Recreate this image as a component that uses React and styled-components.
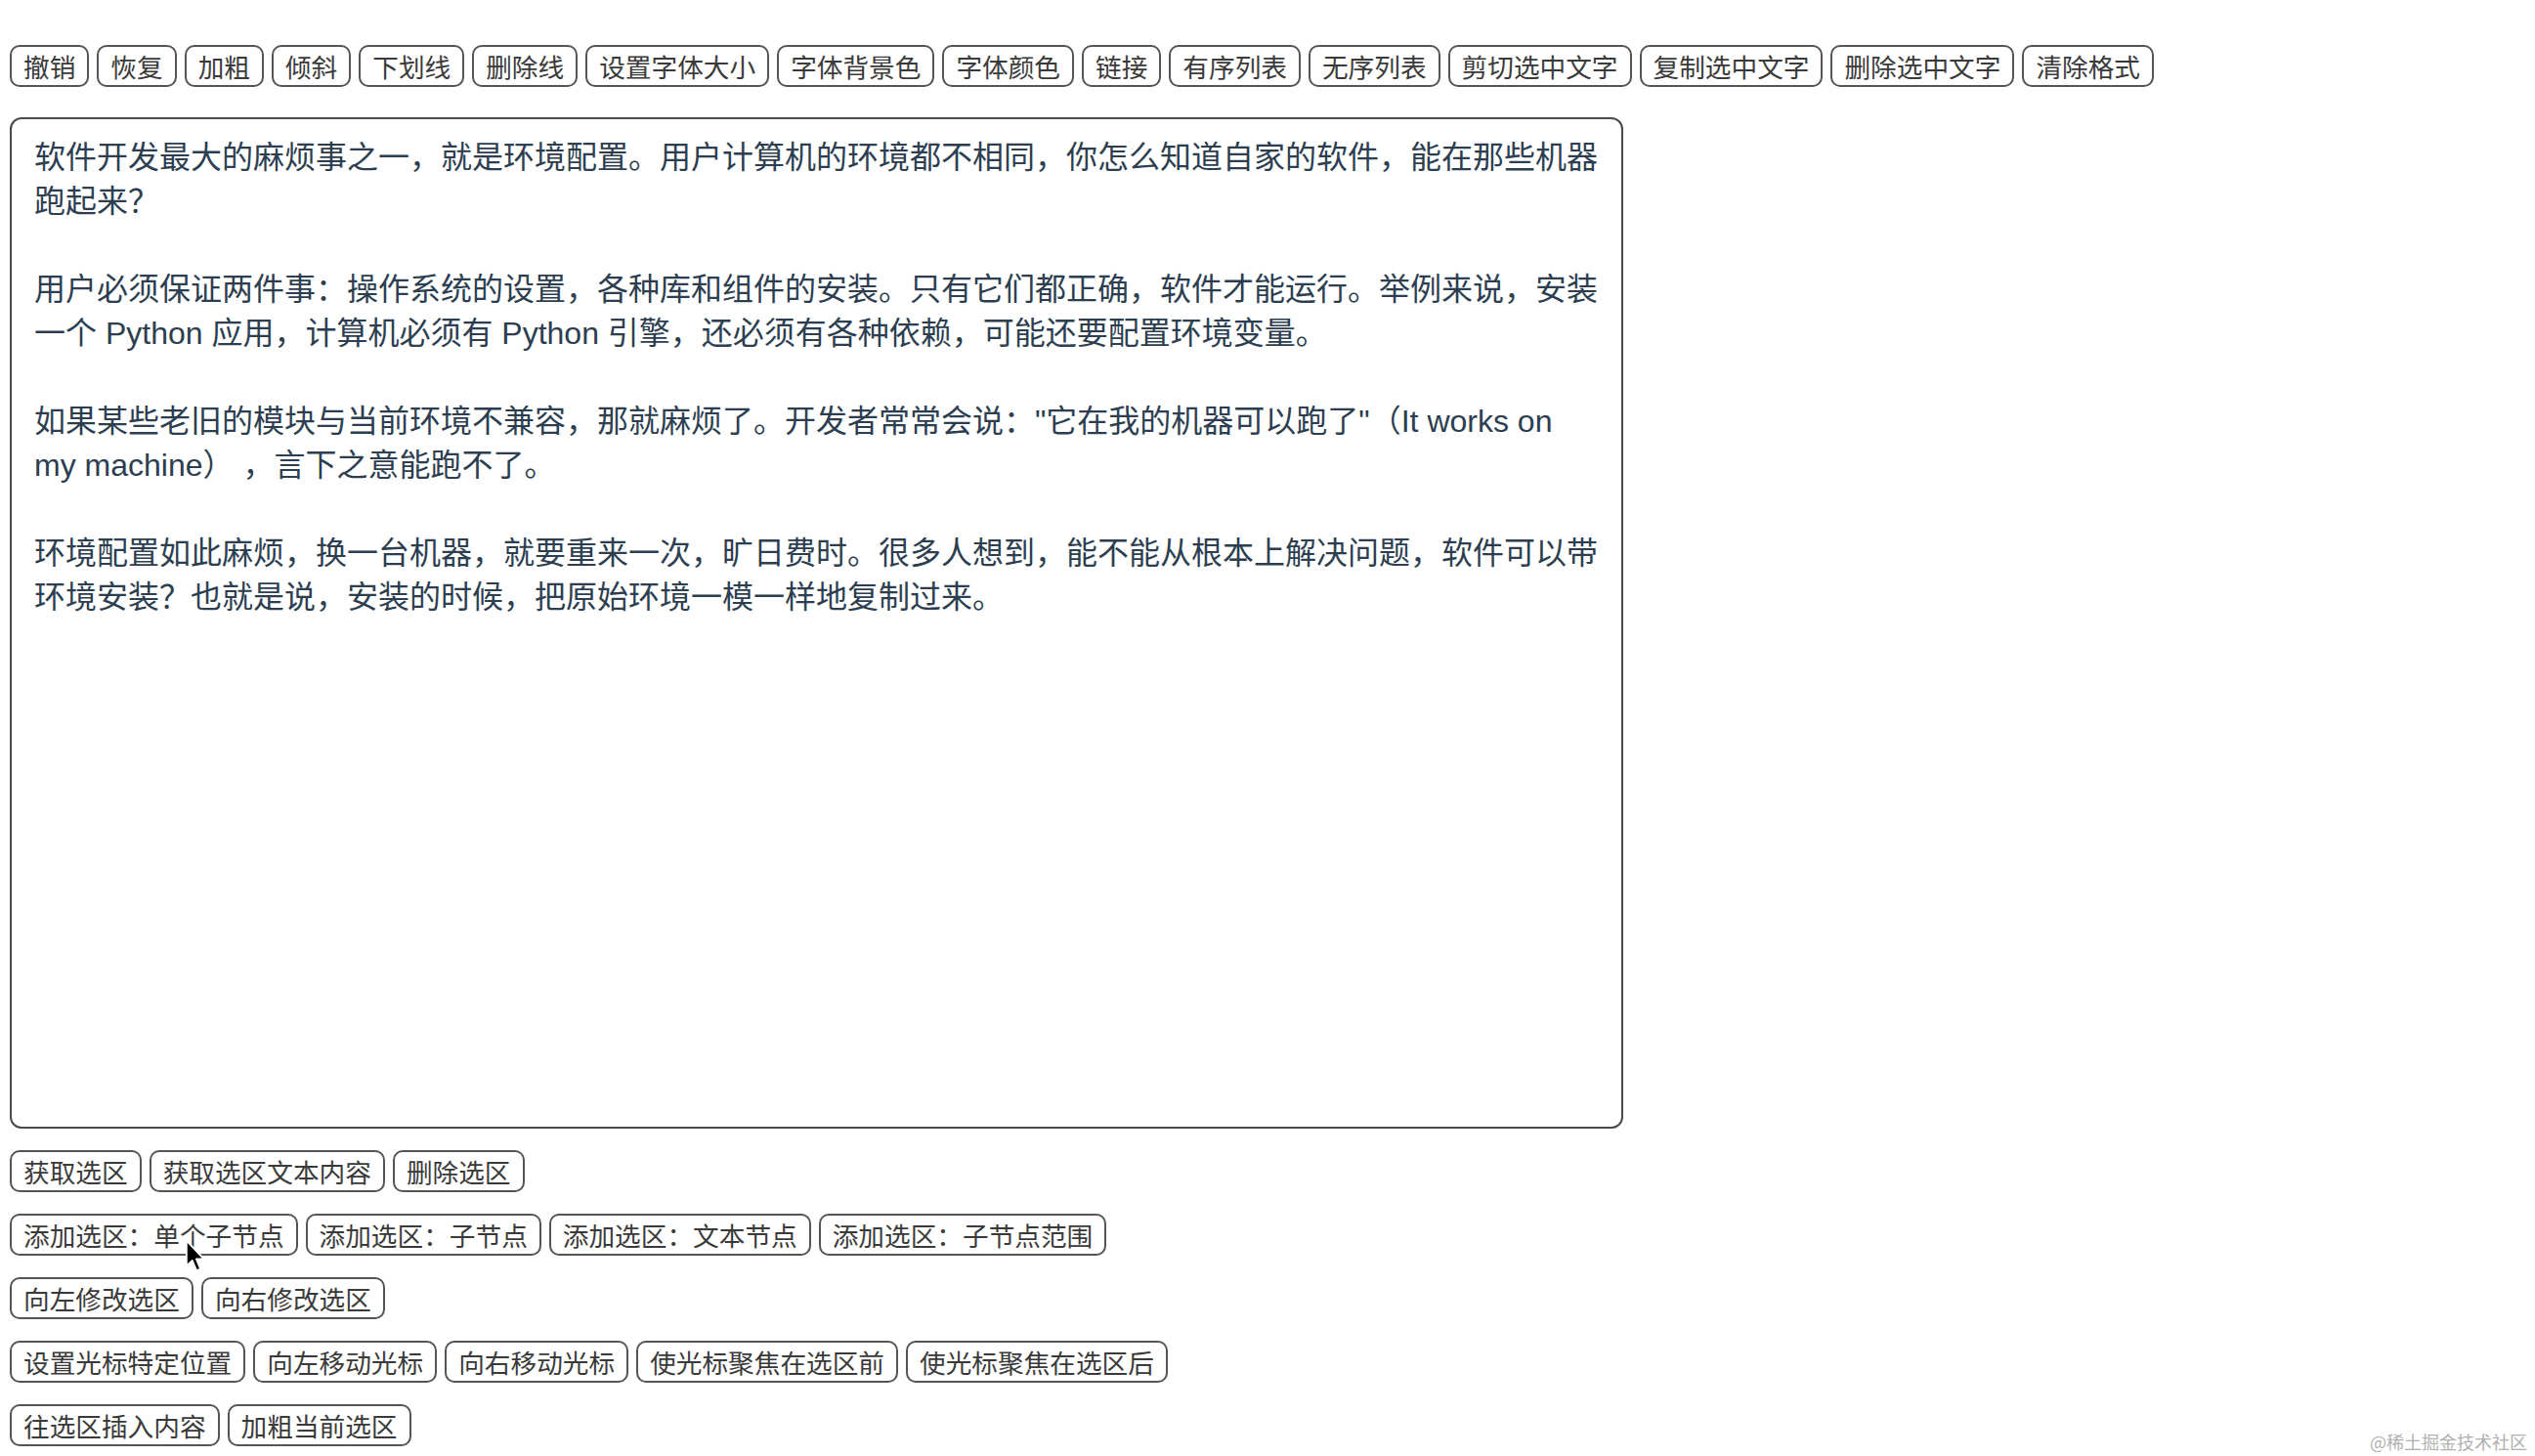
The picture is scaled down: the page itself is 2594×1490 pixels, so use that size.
import React from "react";
import styled, { createGlobalStyle } from "styled-components";

const GlobalStyle = createGlobalStyle`
  html, body {
    margin: 0;
    padding: 0;
    background: #ffffff;
  }
  * {
    box-sizing: border-box;
  }
`;

const toolbarItems = [
  "撤销", "恢复", "加粗", "倾斜", "下划线", "删除线", "设置字体大小", "字体背景色",
  "字体颜色", "链接", "有序列表", "无序列表", "剪切选中文字", "复制选中文字",
  "删除选中文字", "清除格式",
];

const actionRows = [
  ["获取选区", "获取选区文本内容", "删除选区"],
  ["添加选区：单个子节点", "添加选区：子节点", "添加选区：文本节点", "添加选区：子节点范围"],
  ["向左修改选区", "向右修改选区"],
  ["设置光标特定位置", "向左移动光标", "向右移动光标", "使光标聚焦在选区前", "使光标聚焦在选区后"],
  ["往选区插入内容", "加粗当前选区"],
];

const paragraphs = [
  "软件开发最大的麻烦事之一，就是环境配置。用户计算机的环境都不相同，你怎么知道自家的软件，能在那些机器跑起来？",
  "用户必须保证两件事：操作系统的设置，各种库和组件的安装。只有它们都正确，软件才能运行。举例来说，安装一个 Python 应用，计算机必须有 Python 引擎，还必须有各种依赖，可能还要配置环境变量。",
  "如果某些老旧的模块与当前环境不兼容，那就麻烦了。开发者常常会说：\"它在我的机器可以跑了\"（It works on my machine） ，言下之意能跑不了。",
  "环境配置如此麻烦，换一台机器，就要重来一次，旷日费时。很多人想到，能不能从根本上解决问题，软件可以带环境安装？也就是说，安装的时候，把原始环境一模一样地复制过来。",
];

const App = () => {
  return (
    <Page>
      <GlobalStyle />
      <Toolbar>
        {toolbarItems.map((label) => (
          <Btn key={label}>{label}</Btn>
        ))}
      </Toolbar>

      <Editor>
        {paragraphs.map((text, i) => (
          <Para key={i}>{text}</Para>
        ))}
      </Editor>

      <Actions>
        {actionRows.map((row, i) => (
          <Row key={i}>
            {row.map((label) => (
              <Btn key={label}>{label}</Btn>
            ))}
          </Row>
        ))}
      </Actions>

      <Pointer viewBox="0 0 13 21" aria-hidden="true">
        <path
          d="M1 1 L1 16.5 L4.6 13.2 L7.2 19.4 L9.6 18.4 L7 12.3 L11.8 12.3 Z"
          fill="#000"
          stroke="#fff"
          strokeWidth="1.1"
          strokeLinejoin="round"
        />
      </Pointer>

      <Watermark>@稀土掘金技术社区</Watermark>
    </Page>
  );
};

const Page = styled.div`
  position: relative;
  min-height: 1490px;
  padding: 46px 0 0 10px;
  font-family: "Liberation Sans", "Noto Sans CJK SC", sans-serif;
`;

const Toolbar = styled.div`
  display: flex;
  flex-wrap: wrap;
  gap: 8px;
`;

const Btn = styled.button`
  height: 43px;
  padding: 0 12px;
  border: 2px solid #555;
  border-radius: 10px;
  background: #fff;
  color: #3a3a3a;
  font-family: "Noto Sans CJK SC", sans-serif;
  font-size: 26.67px;
  line-height: 38px;
  white-space: nowrap;
  cursor: pointer;
`;

const Editor = styled.div`
  width: 1651px;
  height: 1035px;
  margin-top: 31px;
  padding: 17px 23px 16px;
  border: 2px solid #4a4a4a;
  border-radius: 12px;
  color: #2c3e50;
  font-family: "Liberation Sans", "Noto Sans CJK SC", sans-serif;
  font-size: 32px;
  line-height: 45px;
`;

const Para = styled.p`
  margin: 0 0 45px;
`;

const Actions = styled.div`
  display: flex;
  flex-direction: column;
  gap: 22px;
  margin-top: 22px;
`;

const Row = styled.div`
  display: flex;
  gap: 8px;
`;

const Pointer = styled.svg`
  position: absolute;
  left: 189px;
  top: 1268px;
  width: 22px;
  height: 35px;
`;

const Watermark = styled.div`
  position: absolute;
  right: 8px;
  bottom: 3px;
  color: #b0b0b0;
  font-family: "Noto Sans CJK SC", sans-serif;
  font-size: 18px;
  line-height: 24px;
`;

export default App;
